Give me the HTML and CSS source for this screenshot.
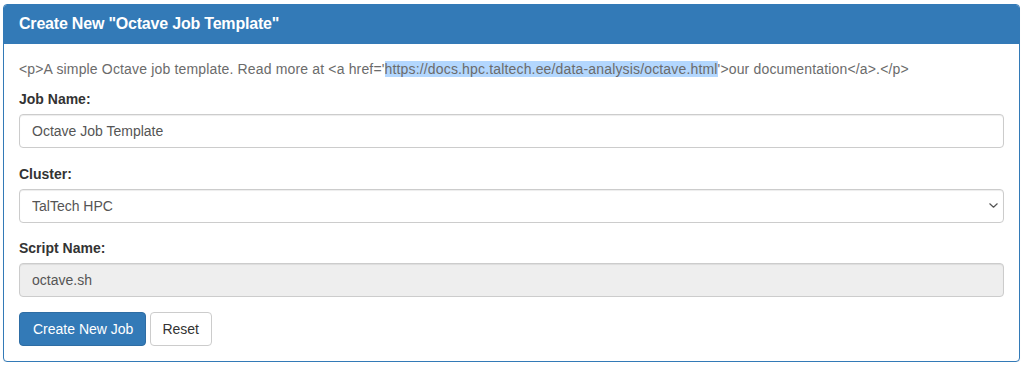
FILE: index.html
```html
<!DOCTYPE html>
<html lang="en">
<head>
<meta charset="utf-8">
<title>Create New Job</title>
<link rel="stylesheet" href="styles.css">
</head>
<body>
<div class="page">
  <div class="panel">
    <div class="panel-heading">
      <h3 class="panel-title">Create New "Octave Job Template"</h3>
    </div>
    <div class="panel-body">
      <p class="desc">&lt;p&gt;A simple Octave job template. Read more at &lt;a href='<span class="sel">https://docs.hpc.taltech.ee/data-analysis/octave.html</span>'&gt;our documentation&lt;/a&gt;.&lt;/p&gt;</p>
      <form class="form">
        <div class="form-group first">
          <label class="label" for="jobname">Job Name:</label>
          <input class="form-control" id="jobname" type="text" value="Octave Job Template">
        </div>
        <div class="form-group">
          <label class="label" for="cluster">Cluster:</label>
          <div class="select-wrap">
            <select class="form-control select" id="cluster">
              <option>TalTech HPC</option>
            </select>
            <svg class="chevron" width="9" height="5" viewBox="0 0 9 5" aria-hidden="true">
              <path d="M0.8 0.8l3.7 3.4 3.7-3.4" fill="none" stroke="#555" stroke-width="1.2" stroke-linecap="round" stroke-linejoin="round"/>
            </svg>
          </div>
        </div>
        <div class="form-group">
          <label class="label" for="script">Script Name:</label>
          <input class="form-control" id="script" type="text" value="octave.sh" readonly>
        </div>
        <div class="actions">
          <button type="button" class="btn btn-primary">Create New Job</button>
          <button type="button" class="btn btn-default">Reset</button>
        </div>
      </form>
    </div>
  </div>
</div>
</body>
</html>
```
FILE: styles.css
```css
* { box-sizing: border-box; }
html, body { margin: 0; padding: 0; background: #fff; }
body {
  font-family: "Liberation Sans", Arial, Helvetica, sans-serif;
  font-size: 14px;
  line-height: 1.42857143;
  color: #333;
}
.page { padding: 4px 5px 0 3px; }
.panel {
  border: 1px solid #337ab7;
  border-radius: 4px;
  background: #fff;
  box-shadow: 0 1px 1px rgba(0,0,0,.05);
}
.panel-heading {
  background: #337ab7;
  color: #fff;
  padding: 10px 15px;
  border-bottom: 1px solid #337ab7;
  border-top-left-radius: 3px;
  border-top-right-radius: 3px;
}
.panel-title {
  margin: 0;
  font-size: 16px;
  line-height: 1.1;
  font-weight: bold;
  letter-spacing: -0.2px;
}
.panel-body { padding: 15px; }
.desc { margin: 0 0 10px; color: #6b6b6b; letter-spacing: 0.16px; }
.sel { background: #b3d7fe; }
.form { margin: 0; }
.form-group { margin-bottom: 15px; }
.form-group.first { margin-bottom: 16px; }
.label {
  display: inline-block;
  max-width: 100%;
  margin-bottom: 5px;
  font-weight: bold;
}
.form-control {
  display: block;
  width: 100%;
  height: 34px;
  padding: 6px 12px;
  font-family: inherit;
  font-size: 14px;
  line-height: 1.42857143;
  color: #555;
  background: #fff;
  border: 1px solid #ccc;
  border-radius: 4px;
  box-shadow: inset 0 1px 1px rgba(0,0,0,.075);
  margin: 0;
}
.form-control[readonly] { background: #eee; opacity: 1; }
.select-wrap { position: relative; }
.select {
  -webkit-appearance: none;
  appearance: none;
  padding-right: 30px;
}
.chevron {
  position: absolute;
  right: 6px;
  top: 14px;
  pointer-events: none;
}
.actions { display: flex; gap: 4px; }
.btn {
  display: inline-block;
  padding: 6px 12px;
  font-family: inherit;
  font-size: 14px;
  line-height: 1.42857143;
  border: 1px solid transparent;
  border-radius: 4px;
  cursor: pointer;
  margin: 0;
}
.btn-primary { background: #337ab7; border-color: #2e6da4; color: #fff; padding: 6px 12px 6px 13px; }
.btn-default { background: #fff; border-color: #ccc; color: #333; padding: 6px 12px 6px 11px; }
```
